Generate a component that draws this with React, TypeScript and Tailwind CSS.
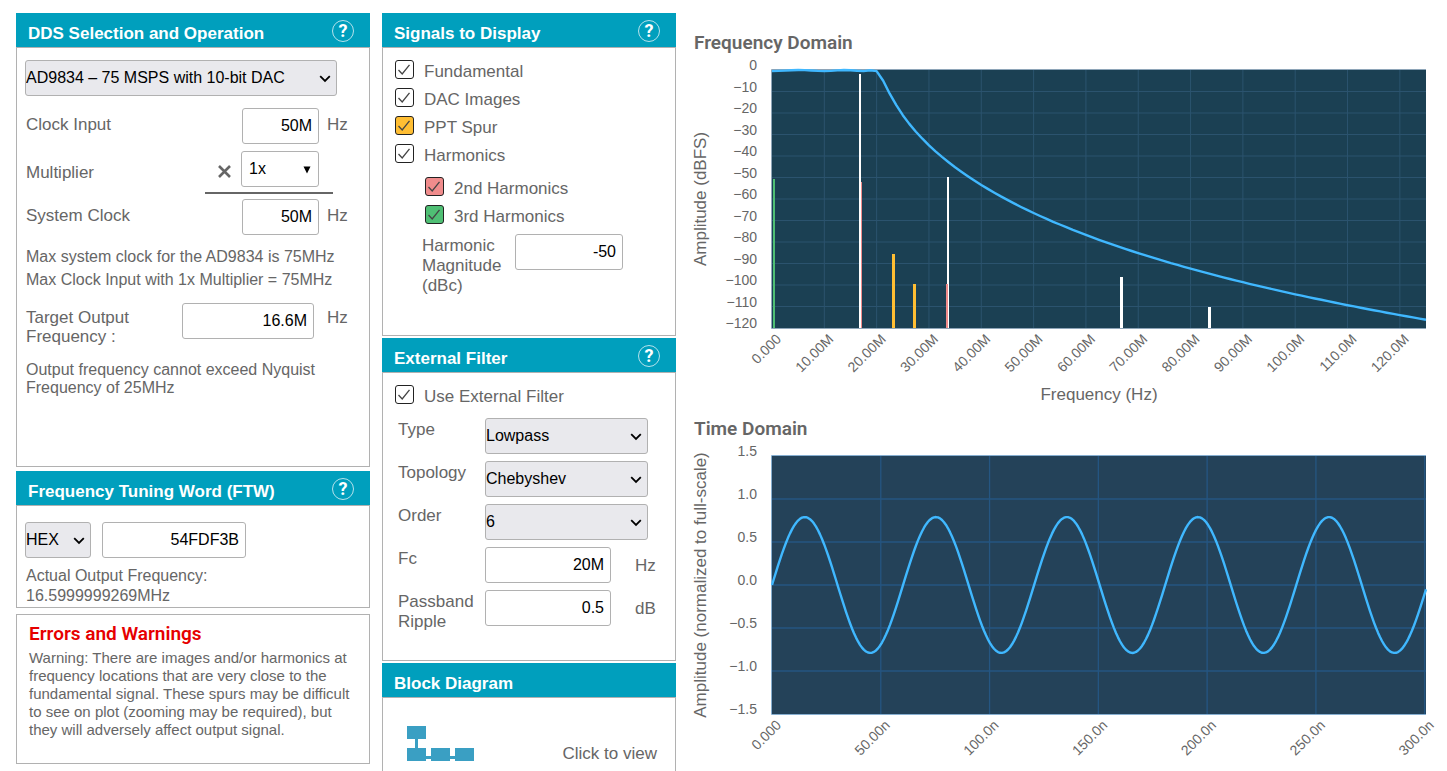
import React, { useId } from 'react';

const SANS = "font-['Liberation_Sans',Arial,sans-serif]";
const DISPLAY = "font-['Roboto','Liberation_Sans',sans-serif]";

function Panel({
  title,
  help = true,
  grow = false,
  children,
}: {
  title: string;
  help?: boolean;
  grow?: boolean;
  children: React.ReactNode;
}) {
  return (
    <section className={grow ? 'flex grow flex-col' : 'flex flex-col'}>
      <header className="flex h-[34px] items-center justify-between bg-[#009fbd] pt-0.5 pr-4 pl-3 text-white">
        <h2 className="pt-1.5 text-[17px] leading-5 font-bold">{title}</h2>
        {help && (
          <button
            type="button"
            aria-label={`Help: ${title}`}
            className={`flex size-[22px] items-center justify-center rounded-full border border-[#b5e2ec] text-[18px] leading-5 font-bold ${DISPLAY}`}
          >
            ?
          </button>
        )}
      </header>
      <div className={grow ? 'grow border border-b-0 border-[#b1b1b1]' : 'border border-[#b1b1b1]'}>{children}</div>
    </section>
  );
}

function SelectBox({
  id,
  label,
  options,
  className,
}: {
  id: string;
  label?: string;
  options: string[];
  className: string;
}) {
  return (
    <div className={`relative h-9 ${className}`}>
      <select
        id={id}
        aria-label={label}
        className="size-full appearance-none rounded-[3px] border border-[#b1b1b1] bg-[#e9e9ed] text-base text-black"
      >
        {options.map((o) => (
          <option key={o}>{o}</option>
        ))}
      </select>
      <svg
        viewBox="0 0 12 8"
        className="pointer-events-none absolute top-[15px] right-1.5 h-2 w-3"
        fill="none"
        stroke="#000"
        strokeWidth="1.800"
      >
        <path d="M1.200 1.200 6 6l4.800-4.800" />
      </svg>
    </div>
  );
}

function NumberBox({
  id,
  label,
  value,
  className,
}: {
  id: string;
  label?: string;
  value: string;
  className: string;
}) {
  return (
    <input
      id={id}
      aria-label={label}
      type="text"
      defaultValue={value}
      className={`h-9 shrink-0 rounded-[3px] border border-[#b1b1b1] bg-white px-1.5 text-right text-base text-black ${className}`}
    />
  );
}

function CheckRow({ label, color = 'bg-white' }: { label: string; color?: string }) {
  const id = useId();
  return (
    <div className="flex h-7 items-start gap-[10px]">
      <span className="relative size-[19px]">
        <input
          id={id}
          type="checkbox"
          defaultChecked
          className={`peer block size-[19px] appearance-none rounded-[3px] border border-[#222] ${color}`}
        />
        <svg
          viewBox="0 0 19 19"
          className="pointer-events-none absolute inset-0 hidden size-[19px] peer-checked:block"
          fill="none"
          stroke="#444"
          strokeWidth="1.3"
        >
          <path d="M3.500 10 7.200 14 14.500 4.800" />
        </svg>
      </span>
      <label htmlFor={id} className="pt-0.5 text-[17px] leading-5">
        {label}
      </label>
    </div>
  );
}

/* ---------- charts ---------- */

const LEFT = 78;
const PLOT_W = 654;
const PLOT_H = 258;

function YTick({ y, children }: { y: number; children: string }) {
  return (
    <text x="63" y={y} textAnchor="end" fontSize="14">
      {children}
    </text>
  );
}

function XTick({ x, y, children }: { x: number; y: number; children: string }) {
  return (
    <text x={x + 10} y={y + 12} textAnchor="end" fontSize="14" transform={`rotate(-45 ${x + 10} ${y + 12})`}>
      {children}
    </text>
  );
}

function FrequencyChart() {
  const top = 16;
  const bottom = top + PLOT_H;
  const fx = (mhz: number) => LEFT + (mhz * PLOT_W) / 125;
  const fy = (db: number) => top - (db * PLOT_H) / 120;

  const response = Array.from({ length: 101 }, (_, i) => {
    const f = i * 1.25;
    const w = f / 20;
    const t = w <= 1 ? Math.cos(6 * Math.acos(w)) : Math.cosh(6 * Math.acosh(w));
    const db = -10 * Math.log10(1 + 0.122 * t * t);
    return `${fx(f).toFixed(1)},${fy(db).toFixed(1)}`;
  }).join(' ');

  const xLabels = [
    '0.000', '10.00M', '20.00M', '30.00M', '40.00M', '50.00M', '60.00M',
    '70.00M', '80.00M', '90.00M', '100.0M', '110.0M', '120.0M',
  ];
  const bars = [
    { x: 167, w: 1, y: 128, c: '#f08c8c' },
    { x: 165, w: 2, y: 20, c: '#ffffff' },
    { x: 253, w: 2, y: 123, c: '#ffffff' },
    { x: 252, w: 2, y: 230, c: '#f08c8c' },
    { x: 79, w: 2, y: 125, c: '#4fbf74' },
    { x: 198, w: 3, y: 200, c: '#ffbe33' },
    { x: 219, w: 3, y: 230, c: '#ffbe33' },
    { x: 426, w: 3, y: 223, c: '#ffffff' },
    { x: 514, w: 3, y: 253, c: '#ffffff' },
  ];

  return (
    <svg viewBox="0 0 738 363" className="block w-full overflow-visible" fill="#666" role="img" aria-label="Frequency Domain">
      <rect x={LEFT} y={top} width={PLOT_W} height={PLOT_H} fill="#1b4053" />
      <g stroke="#2b536e" strokeWidth="1">
        {xLabels.slice(1).map((l, i) => (
          <path key={l} d={`M${fx((i + 1) * 10)} ${top}V${bottom}`} />
        ))}
        {Array.from({ length: 11 }, (_, i) => (
          <path key={i} d={`M${LEFT} ${fy(-(i + 1) * 10)}H${LEFT + PLOT_W}`} />
        ))}
      </g>
      <path d={`M${LEFT + PLOT_W} 15.500H77.500V274.500H${LEFT + PLOT_W}`} fill="none" stroke="#8ea5b8" />
      {bars.map((b) => (
        <rect key={`${b.x}-${b.c}`} x={b.x} y={b.y} width={b.w} height={bottom - b.y} fill={b.c} />
      ))}
      <polyline points={response} fill="none" stroke="#40b8ff" strokeWidth="2.4" strokeLinejoin="round" />
      {Array.from({ length: 13 }, (_, i) => (
        <YTick key={i} y={fy(-i * 10)}>
          {i === 0 ? '0' : `−${i * 10}`}
        </YTick>
      ))}
      {xLabels.map((l, i) => (
        <XTick key={l} x={fx(i * 10)} y={bottom}>
          {l}
        </XTick>
      ))}
      <text x="405" y="346" textAnchor="middle" fontSize="17">
        Frequency (Hz)
      </text>
      <text x="12" y="145" textAnchor="middle" fontSize="17" transform="rotate(-90 12 145)">
        Amplitude (dBFS)
      </text>
    </svg>
  );
}

function TimeChart() {
  const top = 16;
  const bottom = top + PLOT_H;
  const span = 300.6;
  const tx = (ns: number) => LEFT + (ns * PLOT_W) / span;
  const ty = (v: number) => top + PLOT_H / 2 - (v * PLOT_H) / 3;

  const wave = Array.from({ length: 328 }, (_, i) => {
    const x = i * 2;
    const ns = (x / PLOT_W) * span;
    const v = 0.79 * Math.sin(2 * Math.PI * 0.0166 * ns);
    return `${LEFT + x},${ty(v).toFixed(2)}`;
  }).join(' ');

  const xLabels = ['0.000', '50.00n', '100.0n', '150.0n', '200.0n', '250.0n', '300.0n'];
  const yLabels = ['1.5', '1.0', '0.5', '0.0', '−0.5', '−1.0', '−1.5'];

  return (
    <svg viewBox="0 0 738 331" className="block w-full overflow-visible" fill="#666" role="img" aria-label="Time Domain">
      <rect x={LEFT} y={top} width={PLOT_W} height={PLOT_H} fill="#244259" />
      <g stroke="#255682" strokeWidth="1.3">
        {xLabels.slice(1).map((l, i) => (
          <path key={l} d={`M${tx((i + 1) * 50)} ${top}V${bottom}`} />
        ))}
        {[1, 0.5, 0, -0.5, -1].map((v) => (
          <path key={v} d={`M${LEFT} ${ty(v)}H${LEFT + PLOT_W}`} />
        ))}
      </g>
      <path d={`M${LEFT + PLOT_W} 15.500H77.500V274.500H${LEFT + PLOT_W}`} fill="none" stroke="#86aed0" />
      <polyline points={wave} fill="none" stroke="#40b8ff" strokeWidth="2.4" strokeLinejoin="round" />
      {yLabels.map((l, i) => (
        <YTick key={l} y={top + i * 43}>
          {l}
        </YTick>
      ))}
      {xLabels.map((l, i) => (
        <XTick key={l} x={tx(i * 50)} y={bottom}>
          {l}
        </XTick>
      ))}
      <text x="12" y="145" textAnchor="middle" fontSize="17" transform="rotate(-90 12 145)">
        Amplitude (normalized to full-scale)
      </text>
    </svg>
  );
}

/* ---------- page ---------- */

function DdsPanel() {
  return (
    <Panel title="DDS Selection and Operation">
      <div className="pt-3 pb-[69px] pl-2">
        <SelectBox
          id="device"
          label="Device"
          options={['AD9834 – 75 MSPS with 10-bit DAC']}
          className="w-[312px]"
        />
        <div className="mt-3 flex items-start">
          <label htmlFor="clock" className="grow pt-[7px] pl-px text-[17px] leading-5">
            Clock Input
          </label>
          <NumberBox id="clock" value="50M" className="w-[77px]" />
          <span className="w-[50px] pt-[7px] pl-2 text-[17px] leading-5">Hz</span>
        </div>
        <div className="mt-[7px] flex items-start">
          <label htmlFor="multiplier" className="grow pt-3 pl-px text-[17px] leading-5">
            Multiplier
          </label>
          <svg viewBox="0 0 13 13" className="mt-[14px] mr-[10px] size-[13px]" stroke="#666" strokeWidth="2.600">
            <path d="M1 1l11 11M12 1 1 12" />
          </svg>
          <div className="relative mr-[50px] h-9 w-[78px]">
            <select
              id="multiplier"
              className="size-full appearance-none rounded-[3px] border border-[#b1b1b1] bg-white pl-[7px] text-base text-black"
            >
              <option>1x</option>
            </select>
            <svg viewBox="0 0 8 8" className="pointer-events-none absolute top-[15px] right-2 size-2">
              <path d="M.5.5h7L4 7.500z" fill="#000" />
            </svg>
          </div>
        </div>
        <div className="mt-[5px] mr-9 ml-[180px] h-0.5 bg-[#666]" />
        <div className="mt-[5px] flex items-start">
          <label htmlFor="sysclock" className="grow pt-[7px] pl-px text-[17px] leading-5">
            System Clock
          </label>
          <NumberBox id="sysclock" value="50M" className="w-[77px]" />
          <span className="w-[50px] pt-[7px] pl-2 text-[17px] leading-5">Hz</span>
        </div>
        <div className="mt-[10px] pl-px text-base leading-[23px]">
          <p>Max system clock for the AD9834 is 75MHz</p>
          <p>Max Clock Input with 1x Multiplier = 75MHz</p>
        </div>
        <div className="mt-3 flex items-start">
          <label htmlFor="target" className="w-[157px] pt-[5px] pl-px text-[17px] leading-[19px]">
            Target Output
            <br />
            Frequency :
          </label>
          <NumberBox id="target" value="16.6M" className="w-[132px]" />
          <span className="pt-[5px] pl-[13px] text-[17px] leading-5">Hz</span>
        </div>
        <p className="mt-[15px] pr-10 pl-px text-base leading-[18px]">
          Output frequency cannot exceed Nyquist Frequency of 25MHz
        </p>
      </div>
    </Panel>
  );
}

function FilterPanel() {
  const row = 'flex items-start';
  const name = 'w-[87px] shrink-0 pt-0.5 text-[17px] leading-5';
  const unit = 'pt-[9px] pl-6 text-[17px] leading-5';
  return (
    <Panel title="External Filter">
      <div className="pt-3 pb-[34px] pl-3">
        <CheckRow label="Use External Filter" />
        <div className="mt-[5px] flex flex-col gap-[7px] pl-[3px]">
          <div className={row}>
            <label htmlFor="type" className={name}>Type</label>
            <SelectBox id="type" options={['Lowpass']} className="w-[163px]" />
          </div>
          <div className={row}>
            <label htmlFor="topology" className={name}>Topology</label>
            <SelectBox id="topology" options={['Chebyshev']} className="w-[163px]" />
          </div>
          <div className={row}>
            <label htmlFor="order" className={name}>Order</label>
            <SelectBox id="order" options={['6']} className="w-[163px]" />
          </div>
          <div className={row}>
            <label htmlFor="fc" className={name}>Fc</label>
            <NumberBox id="fc" value="20M" className="w-[126px]" />
            <span className={unit}>Hz</span>
          </div>
          <div className="flex h-9 items-start">
            <label htmlFor="ripple" className={name}>Passband Ripple</label>
            <NumberBox id="ripple" value="0.5" className="w-[126px]" />
            <span className={unit}>dB</span>
          </div>
        </div>
      </div>
    </Panel>
  );
}

export default function App() {
  return (
    <main className={`flex min-h-screen items-stretch bg-white pl-4 text-[#666] ${SANS}`}>
      <div className="mr-3 flex w-[354px] shrink-0 flex-col pt-[13px]">
        <DdsPanel />
        <div className="mt-1">
          <Panel title="Frequency Tuning Word (FTW)">
            <div className="px-2 pt-4 pb-px">
              <div className="flex gap-[11px]">
                <SelectBox id="radix" label="Number format" options={['HEX']} className="w-[66px]" />
                <NumberBox id="ftw" label="Tuning word" value="54FDF3B" className="w-[144px]" />
              </div>
              <p className="mt-2 pl-px text-base leading-5">
                Actual Output Frequency:
                <br />
                16.5999999269MHz
              </p>
            </div>
          </Panel>
        </div>
        <section className="mt-1.5 border border-[#b1b1b1] pt-[7px] pb-6 pl-3">
          <h2 className={`text-[19px] leading-6 font-semibold text-[#e60000] ${DISPLAY}`}>Errors and Warnings</h2>
          <p className="mt-[3px] text-[15px] leading-[18px]">
            Warning: There are images and/or harmonics at
            <br />
            frequency locations that are very close to the
            <br />
            fundamental signal. These spurs may be difficult
            <br />
            to see on plot (zooming may be required), but
            <br />
            they will adversely affect output signal.
          </p>
        </section>
      </div>

      <div className="mr-[18px] flex w-[294px] shrink-0 flex-col gap-0.5 pt-[13px]">
        <Panel title="Signals to Display">
          <div className="pt-3 pb-10 pl-3">
            <CheckRow label="Fundamental" />
            <CheckRow label="DAC Images" />
            <CheckRow label="PPT Spur" color="bg-[#ffbe33]" />
            <CheckRow label="Harmonics" />
            <div className="mt-[5px] pl-[30px]">
              <CheckRow label="2nd Harmonics" color="bg-[#f08c8c]" />
              <CheckRow label="3rd Harmonics" color="bg-[#4fbf74]" />
            </div>
            <div className="mt-px flex h-[61px] items-start pl-[27px]">
              <label htmlFor="magnitude" className="w-[93px] pt-0.5 text-[17px] leading-5">
                Harmonic
                <br />
                Magnitude
                <br />
                (dBc)
              </label>
              <NumberBox id="magnitude" value="-50" className="w-[108px]" />
            </div>
          </div>
        </Panel>
        <FilterPanel />
        <Panel title="Block Diagram" help={false} grow>
          <button type="button" className="flex w-full items-end justify-between pt-7 pr-[18px] pl-6">
            <svg viewBox="0 0 67 36" className="h-9 w-[67px]" fill="#3a9fc3">
              <path d="M0 0h19v13H0zM0 22h19v13H0zM24 22h19v13H24zM48 22h19v13H48z" />
              <path d="M8 13h3v9H8zM19 30h5v3h-5zM43 30h5v3h-5z" />
            </svg>
            <span className="text-[17px] leading-4">Click to view</span>
          </button>
        </Panel>
      </div>

      <div className="min-w-0 grow pt-[31px] pr-[15px]">
        <h2 className={`text-[19px] leading-[23px] font-semibold ${DISPLAY}`}>Frequency Domain</h2>
        <FrequencyChart />
        <h2 className={`text-[19px] leading-[23px] font-semibold ${DISPLAY}`}>Time Domain</h2>
        <TimeChart />
      </div>
    </main>
  );
}
